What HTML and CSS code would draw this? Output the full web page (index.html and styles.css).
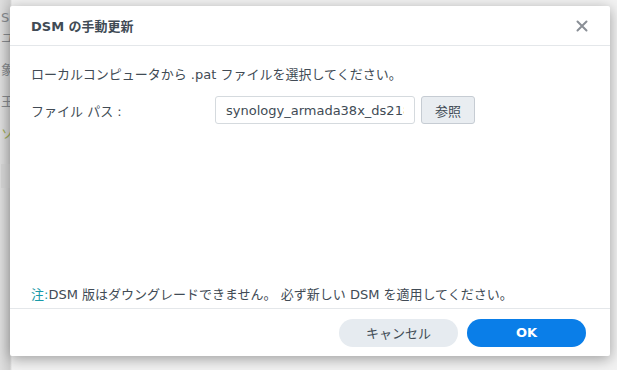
FILE: index.html
```html
<!DOCTYPE html>
<html lang="ja">
<head>
  <meta charset="UTF-8">
  <meta name="viewport" content="width=device-width, initial-scale=1.0">
  <title>DSM の手動更新</title>
  <link rel="stylesheet" href="styles.css">
</head>
<body>
  <div class="screen">
    <div class="page">
      <p class="page-line first">S</p>
      <p class="page-line">ユ</p>
      <p class="page-line gap">象</p>
      <p class="page-line">王</p>
      <p class="page-line ok-mark">ソ</p>
      <div class="page-btn"></div>
    </div>

    <div class="dialog">
      <div class="dialog-header">
        <h1>DSM の手動更新</h1>
        <button class="close" type="button" aria-label="閉じる">
          <svg width="12" height="12" viewBox="0 0 12 12">
            <path d="M1.5 1.5 L10.5 10.5 M10.5 1.5 L1.5 10.5" stroke="#8a8f96" stroke-width="2" stroke-linecap="round"/>
          </svg>
        </button>
      </div>

      <div class="dialog-body">
        <p class="intro">ローカルコンピュータから .pat ファイルを選択してください。</p>
        <div class="field">
          <label for="path">ファイル パス :</label>
          <input type="text" id="path" value="synology_armada38x_ds218j_42218.pat" readonly>
          <button class="browse" type="button">参照</button>
        </div>
        <p class="note"><span class="note-tag">注:</span>DSM 版はダウングレードできません。 必ず新しい DSM を適用してください。</p>
      </div>

      <div class="dialog-footer">
        <button class="btn btn-cancel" type="button">キャンセル</button>
        <button class="btn btn-ok" type="button">OK</button>
      </div>
    </div>
  </div>
</body>
</html>
```

FILE: styles.css
```css
* {
  box-sizing: border-box;
  margin: 0;
  padding: 0;
}

body {
  font-family: "DejaVu Sans", "Noto Sans CJK JP", sans-serif;
  font-size: 13px;
  color: #414b55;
  background: #f4f4f4;
  width: 617px;
  height: 370px;
  overflow: hidden;
}

.screen {
  position: relative;
  height: 370px;
}

/* page behind the modal, mostly hidden */
.page {
  height: 370px;
  padding: 10px 0 0 1px;
  background: linear-gradient(to right, #dedede 0, #cfcfcf 10px, #f2f2f2 12px);
  color: #6a6f75;
}

.page-line {
  line-height: 16px;
  margin-bottom: 16px;
  opacity: 0.75;
}

.page-line.first {
  margin-bottom: 4px;
}

.page-line.gap {
  margin-top: 14px;
}

.page-line.ok-mark {
  color: #8a9b2c;
}

.page-btn {
  margin-top: 22px;
  width: 40px;
  height: 24px;
  background: #d4d4d4;
}

.dialog {
  position: absolute;
  left: 10px;
  top: 6px;
  width: 600px;
  height: 350px;
  background: #fff;
  border-radius: 2px;
  box-shadow: 0 3px 14px rgba(0, 0, 0, 0.35);
  display: flex;
  flex-direction: column;
}

.dialog-header {
  height: 40px;
  display: flex;
  align-items: center;
  justify-content: space-between;
  padding: 0 20px 0 21px;
  border-bottom: 1px solid #e4e7ea;
}

.dialog-header h1 {
  font-size: 13px;
  font-weight: bold;
  color: #414b55;
}

.close {
  background: none;
  border: none;
  width: 16px;
  height: 16px;
  display: flex;
  align-items: center;
  justify-content: center;
  cursor: pointer;
}

.dialog-body {
  flex: 1;
  display: flex;
  flex-direction: column;
  padding: 20px 21px 0 21px;
}

.intro {
  line-height: 18px;
}

.field {
  display: flex;
  align-items: center;
  margin-top: 12px;
}

.field label {
  width: 184px;
}

.field input {
  width: 200px;
  height: 28px;
  padding: 0 10px;
  border: 1px solid #d5dade;
  border-radius: 3px;
  font-family: "DejaVu Sans", sans-serif;
  font-size: 13px;
  color: #414b55;
  outline: none;
}

.browse {
  margin-left: 6px;
  width: 54px;
  height: 28px;
  border: 1px solid #c6ccd3;
  border-radius: 3px;
  background: #e9edf1;
  font-family: "Noto Sans CJK JP", sans-serif;
  font-size: 13px;
  color: #414b55;
  cursor: pointer;
}

.note {
  margin-top: auto;
  margin-bottom: 4px;
  line-height: 18px;
}

.note-tag {
  color: #1a9aa8;
}

.dialog-footer {
  height: 48px;
  border-top: 1px solid #e4e7ea;
  display: flex;
  justify-content: flex-end;
  align-items: center;
  gap: 9px;
  padding: 0 24px 0 0;
}

.btn {
  width: 119px;
  height: 28px;
  border: none;
  border-radius: 14px;
  font-family: "DejaVu Sans", "Noto Sans CJK JP", sans-serif;
  font-size: 13px;
  cursor: pointer;
}

.btn-cancel {
  background: #e6ebf0;
  color: #414b55;
}

.btn-ok {
  background: #0a7ee8;
  color: #fff;
  font-weight: bold;
}
```
